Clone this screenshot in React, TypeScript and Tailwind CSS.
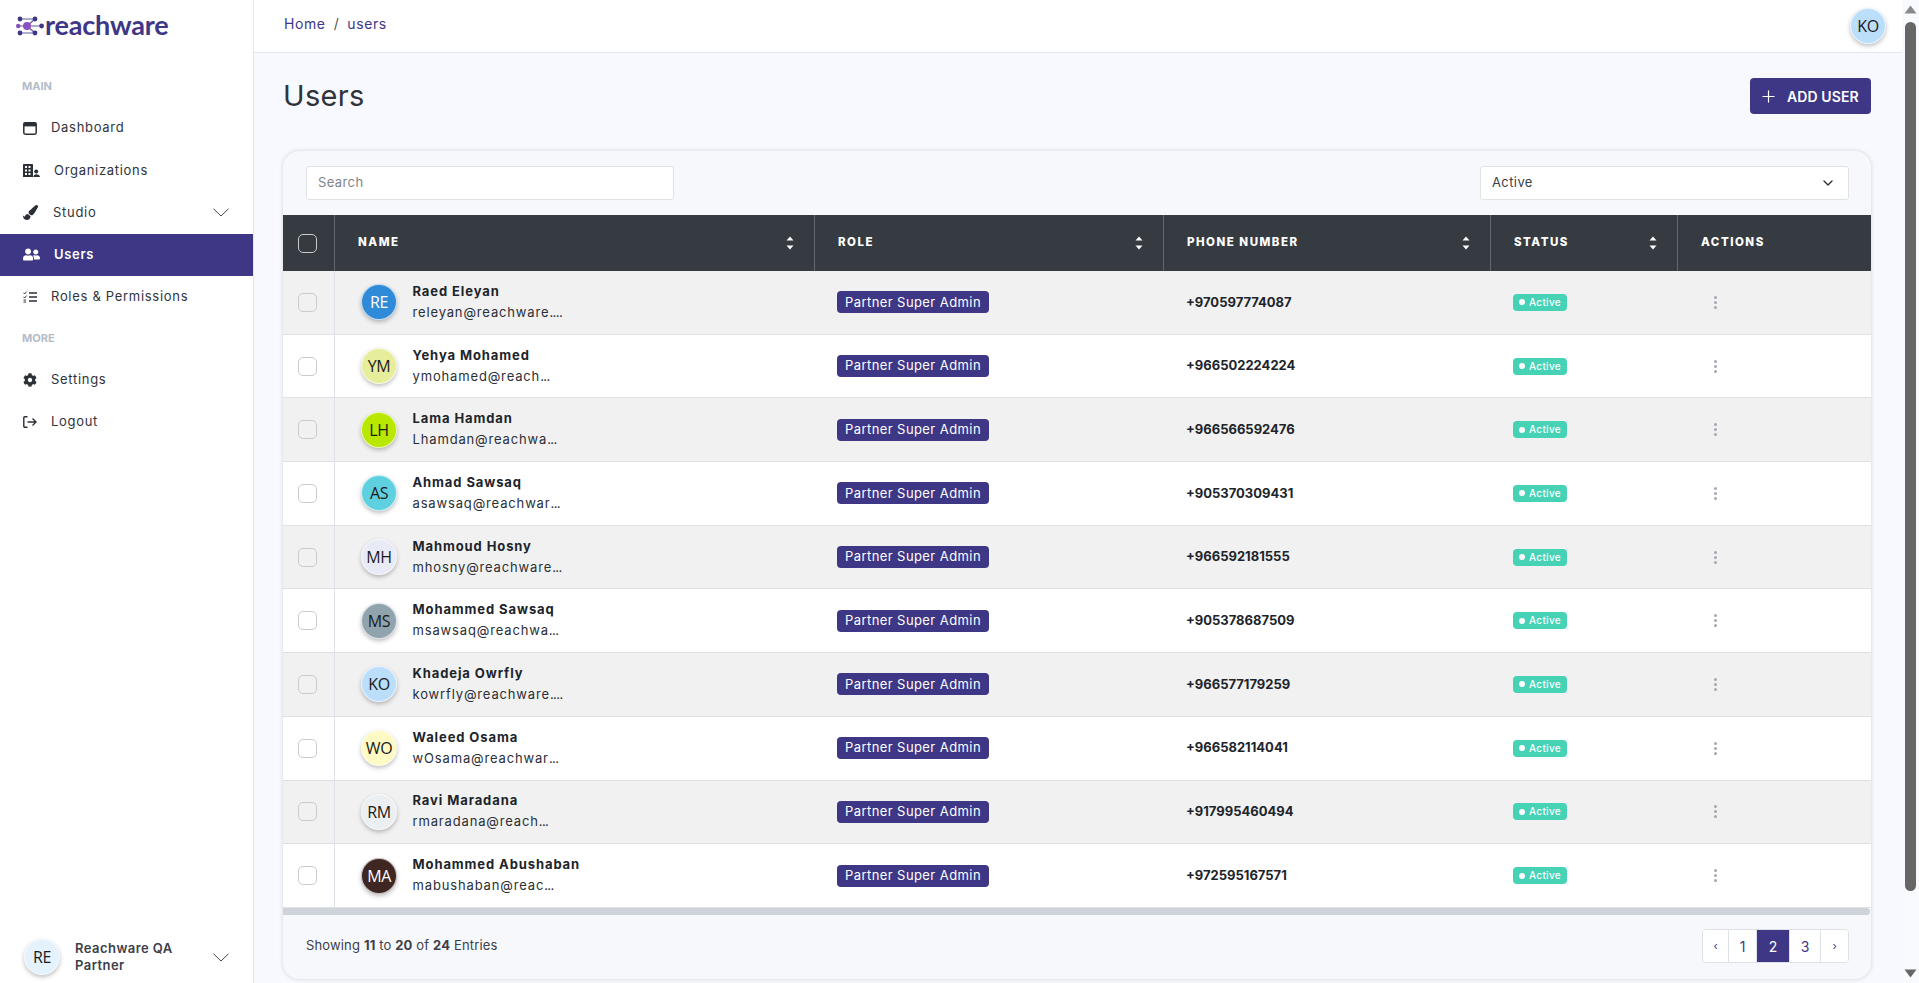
import React from "react";
import { FaCog, FaPaintBrush, FaUserFriends } from "react-icons/fa";
import { ChevronDown, Plus } from "lucide-react";

const users = [
  ["RE", "Raed Eleyan", "releyan@reachware", "....", "+970597774087", "bg-[#2f8bd8]", "text-white"],
  ["YM", "Yehya Mohamed", "ymohamed@reach", "...", "+966502224224", "bg-[#e6ee9c]", "text-[#1a1a1a]"],
  ["LH", "Lama Hamdan", "Lhamdan@reachwa", "...", "+966566592476", "bg-[#b8e800]", "text-[#1a1a1a]"],
  ["AS", "Ahmad Sawsaq", "asawsaq@reachwar", "...", "+905370309431", "bg-[#5fd0e0]", "text-[#1a1a1a]"],
  ["MH", "Mahmoud Hosny", "mhosny@reachware", "...", "+966592181555", "bg-[#e8eaf6]", "text-[#1a1a1a]"],
  ["MS", "Mohammed Sawsaq", "msawsaq@reachwa", "...", "+905378687509", "bg-[#90a4ae]", "text-[#1a1a1a]"],
  ["KO", "Khadeja Owrfly", "kowrfly@reachware", "....", "+966577179259", "bg-[#bbdefb]", "text-[#1a1a1a]"],
  ["WO", "Waleed Osama", "wOsama@reachwar", "...", "+966582114041", "bg-[#fff9c4]", "text-[#1a1a1a]"],
  ["RM", "Ravi Maradana", "rmaradana@reach", "...", "+917995460494", "bg-[#eceff1]", "text-[#1a1a1a]"],
  ["MA", "Mohammed Abushaban", "mabushaban@reac", "...", "+972595167571", "bg-[#3e2723]", "text-white"],
];

const cols = "grid grid-cols-[52px_480px_349px_327px_187px_193px]";

function Avatar({ t, bg, fg }: { t: string; bg: string; fg: string }) {
  return (
    <div className={`w-9 h-9 shrink-0 rounded-full border border-white/70 shadow-[0_2px_4px_rgba(0,0,0,0.25)] flex items-center justify-center font-['Open_Sans',sans-serif] text-[16px] tracking-[-0.4px] ${bg} ${fg}`}>
      {t}
    </div>
  );
}

function Sort() {
  return (
    <svg width="8" height="14" viewBox="0 0 8 14" className="shrink-0">
      <path d="M4 0.5 L7.5 4.5 H0.5 Z" fill="#fff" />
      <path d="M4 13.5 L7.5 9.5 H0.5 Z" fill="#fff" />
    </svg>
  );
}

function Chevron() {
  return (
    <svg width="16" height="9" viewBox="0 0 16 9" fill="none" stroke="#2b2f36" strokeWidth="0.9" className="ml-auto shrink-0">
      <path d="M0.5 0.8 L8 8 L15.5 0.8" />
    </svg>
  );
}

function DashIcon() {
  return (
    <svg width="14" height="13" viewBox="0 0 14 13">
      <rect x="0.8" y="0.8" width="12.4" height="11.4" rx="1.4" fill="none" stroke="#2b2f36" strokeWidth="1.5" />
      <rect x="0.8" y="0.8" width="12.4" height="3.6" fill="#2b2f36" />
    </svg>
  );
}

function OrgIcon() {
  return (
    <svg width="17" height="13" viewBox="0 0 17 13" fill="#2b2f36">
      <path fillRule="evenodd" d="M0 0.8 A0.8 0.8 0 0 1 0.8 0 H9.2 A0.8 0.8 0 0 1 10 0.8 V13 H0 Z M2 2 V4 H4 V2 Z M5.5 2 V4 H7.5 V2 Z M2 5.5 V7.5 H4 V5.5 Z M5.5 5.5 V7.5 H7.5 V5.5 Z M2 9 V11 H4 V9 Z M5.5 9 V11 H7.5 V9 Z" />
      <circle cx="13.2" cy="7.4" r="2" />
      <path d="M10.4 13 C10.4 11 11.8 10.2 13.2 10.2 C14.8 10.2 17 11 17 13 Z" />
    </svg>
  );
}

function RolesIcon() {
  return (
    <svg width="14" height="12" viewBox="0 0 14 12" fill="none" stroke="#2b2f36">
      <path d="M6 2 H14 M6 6 H14 M6 10 H14" strokeWidth="1.4" />
      <path d="M0.5 1.8 L1.6 3 L3.6 0.6 M0.5 5.8 L1.6 7 L3.6 4.6" strokeWidth="1" />
      <path d="M0.5 9 H3 M0.5 11 H3" strokeWidth="1" />
    </svg>
  );
}

function LogoutIcon() {
  return (
    <svg width="14" height="12" viewBox="0 0 14 12" fill="none" stroke="#2b2f36" strokeWidth="1.4">
      <path d="M4.5 0.8 H1.8 A1 1 0 0 0 0.8 1.8 V10.2 A1 1 0 0 0 1.8 11.2 H4.5" />
      <path d="M4.5 6 H13 M9.5 2.6 L13 6 L9.5 9.4" />
    </svg>
  );
}

function Logo() {
  return (
    <div className="flex items-center h-[52px] pl-4 pb-[1px] shrink-0">
      <svg width="28" height="20" viewBox="0 0 28 20" className="shrink-0">
        <g stroke="#5e5aa0" strokeWidth="1.2" fill="none">
          <path d="M4 3 H19 M4 17 H19" />
          <path d="M2 10 H26 M11 10 L19 3 M11 10 L19 17" />
        </g>
        <g fill="#3d3785">
          <circle cx="4" cy="3" r="2.4" /><circle cx="19" cy="3" r="2.4" />
          <circle cx="4" cy="17" r="2.4" /><circle cx="19" cy="17" r="2.4" />
          <circle cx="25.6" cy="10" r="2.4" />
        </g>
        <circle cx="2.2" cy="10" r="2.2" fill="#8a4fc0" />
        <circle cx="11" cy="10" r="4" fill="#8a4fc0" />
      </svg>
      <span className="font-['Lato',sans-serif] font-bold text-[27px] leading-none text-[#3d3785] ml-[1px] tracking-[-0.2px] pb-[3px]">reachware</span>
    </div>
  );
}

function NavItem({ icon, label, active, pl, chevron }: { icon: React.ReactNode; label: string; active?: boolean; pl: string; chevron?: boolean }) {
  return (
    <div className={`h-[42.2px] flex items-center pl-[23px] pr-[24px] text-[13px] tracking-[0.7px] ${active ? "bg-[#3d3785] text-white font-semibold" : "text-[#2f343b]"}`}>
      <span className="w-7 shrink-0 flex items-center">{icon}</span>
      <span className={pl}>{label}</span>
      {chevron && <Chevron />}
    </div>
  );
}

function Section({ label }: { label: string }) {
  return <div className="text-[11px] font-bold text-[#b4bcc8] pl-[22px] h-[40px] flex items-center">{label}</div>;
}

function Sidebar() {
  return (
    <aside className="w-[254px] shrink-0 bg-white border-r border-[#e3e6ee] flex flex-col h-full">
      <Logo />
      <div className="pt-[14px]">
        <Section label="MAIN" />
        <div className="pt-[1px]">
          <NavItem icon={<DashIcon />} label="Dashboard" pl="" />
          <NavItem icon={<OrgIcon />} label="Organizations" pl="pl-[3px]" />
          <NavItem icon={<FaPaintBrush size={15} className="text-[#2b2f36]" />} label="Studio" pl="pl-[2px]" chevron />
          <NavItem icon={<FaUserFriends size={17} className="text-white" />} label="Users" pl="pl-[3px]" active />
          <NavItem icon={<RolesIcon />} label="Roles & Permissions" pl="" />
        </div>
        <Section label="MORE" />
        <div className="pt-[1px]">
          <NavItem icon={<FaCog size={14} className="text-[#2b2f36]" />} label="Settings" pl="" />
          <NavItem icon={<LogoutIcon />} label="Logout" pl="" />
        </div>
      </div>
      <div className="mt-auto h-[50px] mb-[1px] pl-6 pr-[24px] flex items-center">
        <Avatar t="RE" bg="bg-[#e3f2fd]" fg="text-[#1a1a1a]" />
        <div className="ml-[15px] text-[13px] leading-[17px] font-semibold text-[#3c4048] tracking-[0.45px] w-[105px]">Reachware QA Partner</div>
        <Chevron />
      </div>
    </aside>
  );
}

function Row({ u, i }: { u: string[]; i: number }) {
  const bg = i % 2 === 0 ? "bg-[#f1f1f1]" : "bg-white";
  return (
    <div className={`${cols} ${bg} h-[63.7px] border-b border-[#e0e1e7] items-stretch`}>
      <div className="border-r border-[#dfe1e8] flex items-center pl-[15px]">
        <div className={`w-[19px] h-[19px] rounded-[5px] border border-[#c9cbd0] ${bg}`} />
      </div>
      <div className="flex items-center pl-[26px]">
        <Avatar t={u[0]} bg={u[5]} fg={u[6]} />
        <div className="ml-[15.5px] text-[13px] leading-[21px] pb-[1px]">
          <div className="font-bold text-[13px] text-[#20242a] tracking-[0.9px]">{u[1]}</div>
          <div className="text-[#2b2f36] tracking-[0.85px]">{u[2]}<span className="tracking-[-0.6px]">{u[3]}</span></div>
        </div>
      </div>
      <div className="flex items-center pl-[22px]">
        <span className="bg-[#3d3785] text-white text-[13px] h-[22px] w-[152px] pl-2 rounded-[4px] flex items-center tracking-[0.42px] whitespace-nowrap">Partner Super Admin</span>
      </div>
      <div className="flex items-center pl-[22px] text-[13px] font-bold text-[#20242a] tracking-[0px]">{u[4]}</div>
      <div className="flex items-center pl-[22px]">
        <span className="bg-[#46d2b5] text-white text-[10px] font-medium h-[17px] w-[54px] rounded-[4px] flex items-center pl-[6px] gap-[4px] tracking-[0.3px]">
          <span className="w-[6px] h-[6px] rounded-full bg-white" />Active
        </span>
      </div>
      <div className="flex items-center pl-[36px]">
        <div className="flex flex-col gap-[2px]">
          <span className="w-[3px] h-[3px] rounded-full bg-[#a3a8b3]" />
          <span className="w-[3px] h-[3px] rounded-full bg-[#a3a8b3]" />
          <span className="w-[3px] h-[3px] rounded-full bg-[#a3a8b3]" />
        </div>
      </div>
    </div>
  );
}

function Head({ label, sort, border = true }: { label: string; sort?: boolean; border?: boolean }) {
  return (
    <div className={`flex items-center pl-[23px] pr-[20px] justify-between ${border ? "border-r border-[#62666d]" : ""}`}>
      <span className="text-[11.5px] font-extrabold tracking-[1.5px] text-white">{label}</span>
      {sort && <Sort />}
    </div>
  );
}

function Scrollbar() {
  return (
    <div className="w-[17px] shrink-0 h-full bg-[#f9fafe] flex flex-col items-center">
      <svg width="13" height="9" viewBox="0 0 13 9" className="mt-[5px] shrink-0"><path d="M6.5 0.5 L12.5 8.5 H0.5 Z" fill="#8a8a8a" /></svg>
      <div className="w-[11px] h-[869px] rounded-[6px] bg-[#666666] mt-[8px]" />
      <svg width="13" height="9" viewBox="0 0 13 9" className="mt-auto mb-[5px] shrink-0"><path d="M6.5 8.5 L12.5 0.5 H0.5 Z" fill="#666666" /></svg>
    </div>
  );
}

function PageBtn({ children, w, active, last, small }: { children: React.ReactNode; w: string; active?: boolean; last?: boolean; small?: boolean }) {
  return (
    <div className={`${w} h-full flex items-center justify-center ${small ? "text-[11px]" : "text-[14px]"} ${active ? "bg-[#3d3785] text-white" : "bg-white text-[#3d3785]"} ${last ? "" : "border-r border-[#dfe1e8]"}`}>{children}</div>
  );
}

export default function App() {
  return (
    <div className="h-screen w-full flex overflow-hidden bg-[#f8f9fe] font-['Inter',sans-serif]">
      <Sidebar />
      <div className="flex-1 min-w-0 flex flex-col h-full">
        <header className="h-[53px] shrink-0 bg-white border-b border-[#e3e6ee] flex items-center justify-between pl-[30px] pr-[16px]">
          <div className="text-[14px] text-[#3d3785] tracking-[0.6px] pb-[6px]">Home<span className="mx-[8px] text-[#555]">/</span>users</div>
          <div className="pb-[1px]"><Avatar t="KO" bg="bg-[#bbdefb]" fg="text-[#1a1a1a]" /></div>
        </header>
        <main className="flex-1 min-h-0 pl-[29px] pr-[31px]">
          <div className="flex items-center justify-between h-[98px] pb-[12px]">
            <h1 className="text-[29px] font-normal leading-none text-[#2f343b] tracking-[0.3px] pb-[2px]">Users</h1>
            <button className="w-[121px] h-9 bg-[#3d3785] text-white rounded-[4px] flex items-center pl-[9px] text-[14px] font-semibold tracking-[0.1px]">
              <Plus size={19} strokeWidth={1.5} />
              <span className="ml-[9px]">ADD USER</span>
            </button>
          </div>
          <section className="rounded-[16px] bg-[#f7f8fb] shadow-[0_0_4px_rgba(60,60,90,0.2)] overflow-hidden">
            <div className="flex justify-between items-center h-16 pl-[23px] pr-[22px]">
              <div className="w-[368px] h-[34px] bg-white border border-[#e0e2e8] rounded-[3px] flex items-center pl-[11px] text-[13px] text-[#80858c] tracking-[0.4px]">Search</div>
              <div className="w-[369px] h-[34px] bg-white border border-[#e0e2e8] rounded-[3px] flex items-center pl-[11px] pr-[12px] justify-between text-[13px] text-[#3c4048] tracking-[0.4px]">
                Active
                <ChevronDown size={16} strokeWidth={2} className="text-[#2b2f36]" />
              </div>
            </div>
            <div className={`${cols} h-14 bg-[#363a41]`}>
              <div className="border-r border-[#62666d] flex items-center pl-[15px]">
                <div className="w-[19px] h-[19px] rounded-[5px] border border-[#c9cbd0]" />
              </div>
              <Head label="NAME" sort />
              <Head label="ROLE" sort />
              <Head label="PHONE NUMBER" sort />
              <Head label="STATUS" sort />
              <Head label="ACTIONS" border={false} />
            </div>
            {users.map((u, i) => <Row key={u[0]} u={u} i={i} />)}
            <div className="h-[7px] bg-[#ced4da] rounded-r-[4px] mr-[1px]" />
            <div className="h-[64px] flex items-center justify-between pl-[23px] pr-[22px]">
              <div className="text-[13px] text-[#3c4048] tracking-[0.15px] pb-[2px]">
                Showing <b className="font-bold">11</b> to <b className="font-bold">20</b> of <b className="font-bold">24</b> Entries
              </div>
              <div className="flex h-[34px] rounded-[4px] border border-[#dfe1e8] overflow-hidden mb-[1px]">
                <PageBtn w="w-[26px]" small>‹</PageBtn>
                <PageBtn w="w-[28px]">1</PageBtn>
                <PageBtn w="w-[33px]" active>2</PageBtn>
                <PageBtn w="w-[31px]">3</PageBtn>
                <PageBtn w="w-[27px]" last small>›</PageBtn>
              </div>
            </div>
          </section>
        </main>
      </div>
      <Scrollbar />
    </div>
  );
}
